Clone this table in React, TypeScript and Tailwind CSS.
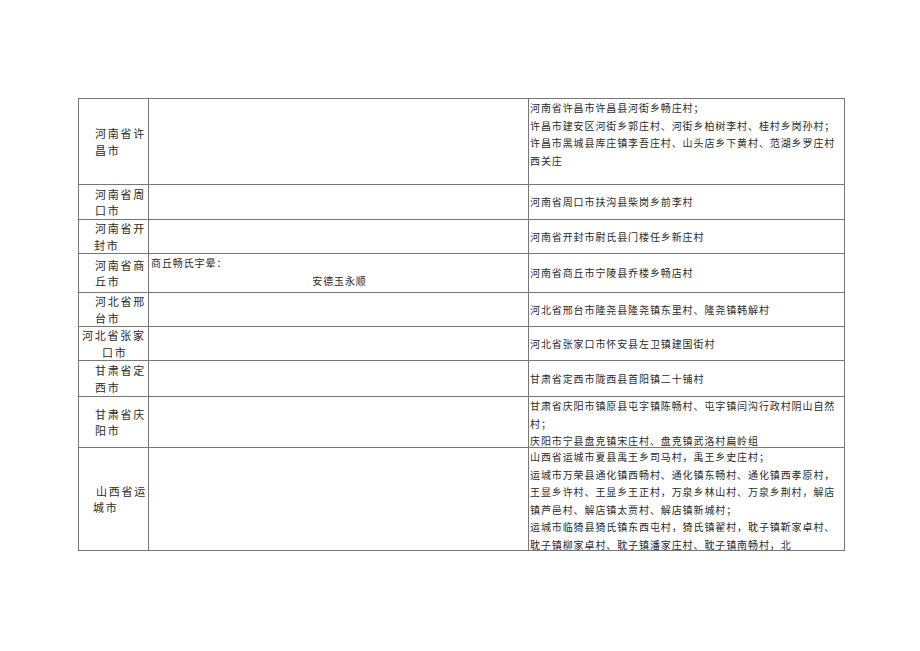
type Row = {
  h: string;
  city: [string, string];
  pad: [string, string];
  middle?: string[];
  places: string[];
  top?: boolean;
};

const rows: Row[] = [
  {
    h: "h-[86px]",
    city: ["河南省许", "昌市"],
    pad: ["pl-[16px]", "pl-[16px]"],
    places: [
      "河南省许昌市许昌县河街乡畅庄村；",
      "许昌市建安区河街乡郭庄村、河街乡柏树李村、桂村乡岗孙村；",
      "许昌市黑城县库庄镇李吾庄村、山头店乡下黄村、范湖乡罗庄村",
      "西关庄",
    ],
    top: true,
  },
  {
    h: "h-[35px]",
    city: ["河南省周", "口市"],
    pad: ["pl-[16px]", "pl-[16px]"],
    places: ["河南省周口市扶沟县柴岗乡前李村"],
  },
  {
    h: "h-[34px]",
    city: ["河南省开", "封市"],
    pad: ["pl-[16px]", "pl-[15px]"],
    places: ["河南省开封市尉氏县门楼任乡新庄村"],
  },
  {
    h: "h-[39px]",
    city: ["河南省商", "丘市"],
    pad: ["pl-[16px]", "pl-[16px]"],
    middle: ["商丘畅氏宇晕："],
    places: ["河南省商丘市宁陵县乔楼乡畅店村"],
  },
  {
    h: "h-[34px]",
    city: ["河北省邢", "台市"],
    pad: ["pl-[16px]", "pl-[16px]"],
    places: ["河北省邢台市隆尧县隆尧镇东里村、隆尧镇韩解村"],
  },
  {
    h: "h-[34px]",
    city: ["河北省张家", "口市"],
    pad: ["pl-[3px]", "pl-[23px]"],
    places: ["河北省张家口市怀安县左卫镇建国街村"],
  },
  {
    h: "h-[36px]",
    city: ["甘肃省定", "西市"],
    pad: ["pl-[16px]", "pl-[16px]"],
    places: ["甘肃省定西市陇西县首阳镇二十铺村"],
  },
  {
    h: "h-[51px]",
    city: ["甘肃省庆", "阳市"],
    pad: ["pl-[16px]", "pl-[16px]"],
    places: [
      "甘肃省庆阳市镇原县屯字镇陈畅村、屯字镇闫沟行政村阴山自然",
      "村；",
      "庆阳市宁县盘克镇宋庄村、盘克镇武洛村扁岭组",
    ],
    top: true,
  },
  {
    h: "h-[103px]",
    city: ["山西省运", "城市"],
    pad: ["pl-[17px]", "pl-[14px]"],
    places: [
      "山西省运城市夏县禹王乡司马村，禹王乡史庄村；",
      "运城市万荣县通化镇西畅村、通化镇东畅村、通化镇西孝原村，",
      "王显乡许村、王显乡王正村，万泉乡林山村、万泉乡荆村，解店",
      "镇芦邑村、解店镇太贾村、解店镇新城村；",
      "运城市临猗县猗氏镇东西屯村，猗氏镇翟村，耽子镇靳家卓村、",
      "耽子镇柳家卓村、耽子镇潘家庄村、耽子镇南畅村，北",
    ],
    top: true,
  },
];

export default function App() {
  return (
    <div
      className="min-h-[651px] w-[920px] bg-white pt-[98px] pl-[78px] text-[#2a2a2a]"
      style={{ fontFamily: '"Noto Sans CJK SC", "Noto Sans", sans-serif' }}
    >
      <div className="w-[767px] border-l border-t border-[#777]">
        {rows.map((r, i) => (
          <div key={i} className={`flex ${r.h} border-b border-[#777]`}>
            <div className="flex w-[70px] flex-col justify-center border-r border-[#777] text-[11px] leading-[16.5px] tracking-[1.75px] whitespace-nowrap">
              <div className={r.pad[0]}>{r.city[0]}</div>
              <div className={r.pad[1]}>{r.city[1]}</div>
            </div>
            <div className="w-[380px] overflow-hidden border-r border-[#777] pl-[2px] text-[10px] leading-[17.6px] tracking-[0.9px]">
              {r.middle && (
                <>
                  <div>{r.middle[0]}</div>
                  <div className="text-center">安德玉永顺</div>
                </>
              )}
            </div>
            <div
              className={`flex w-[316px] flex-col border-r border-[#777] pl-[1px] text-[10px] leading-[17.6px] tracking-[0.9px] whitespace-nowrap ${
                r.top ? "justify-start" : "justify-center"
              }`}
            >
              {r.places.map((p, j) => (
                <div key={j}>{p}</div>
              ))}
            </div>
          </div>
        ))}
      </div>
    </div>
  );
}
